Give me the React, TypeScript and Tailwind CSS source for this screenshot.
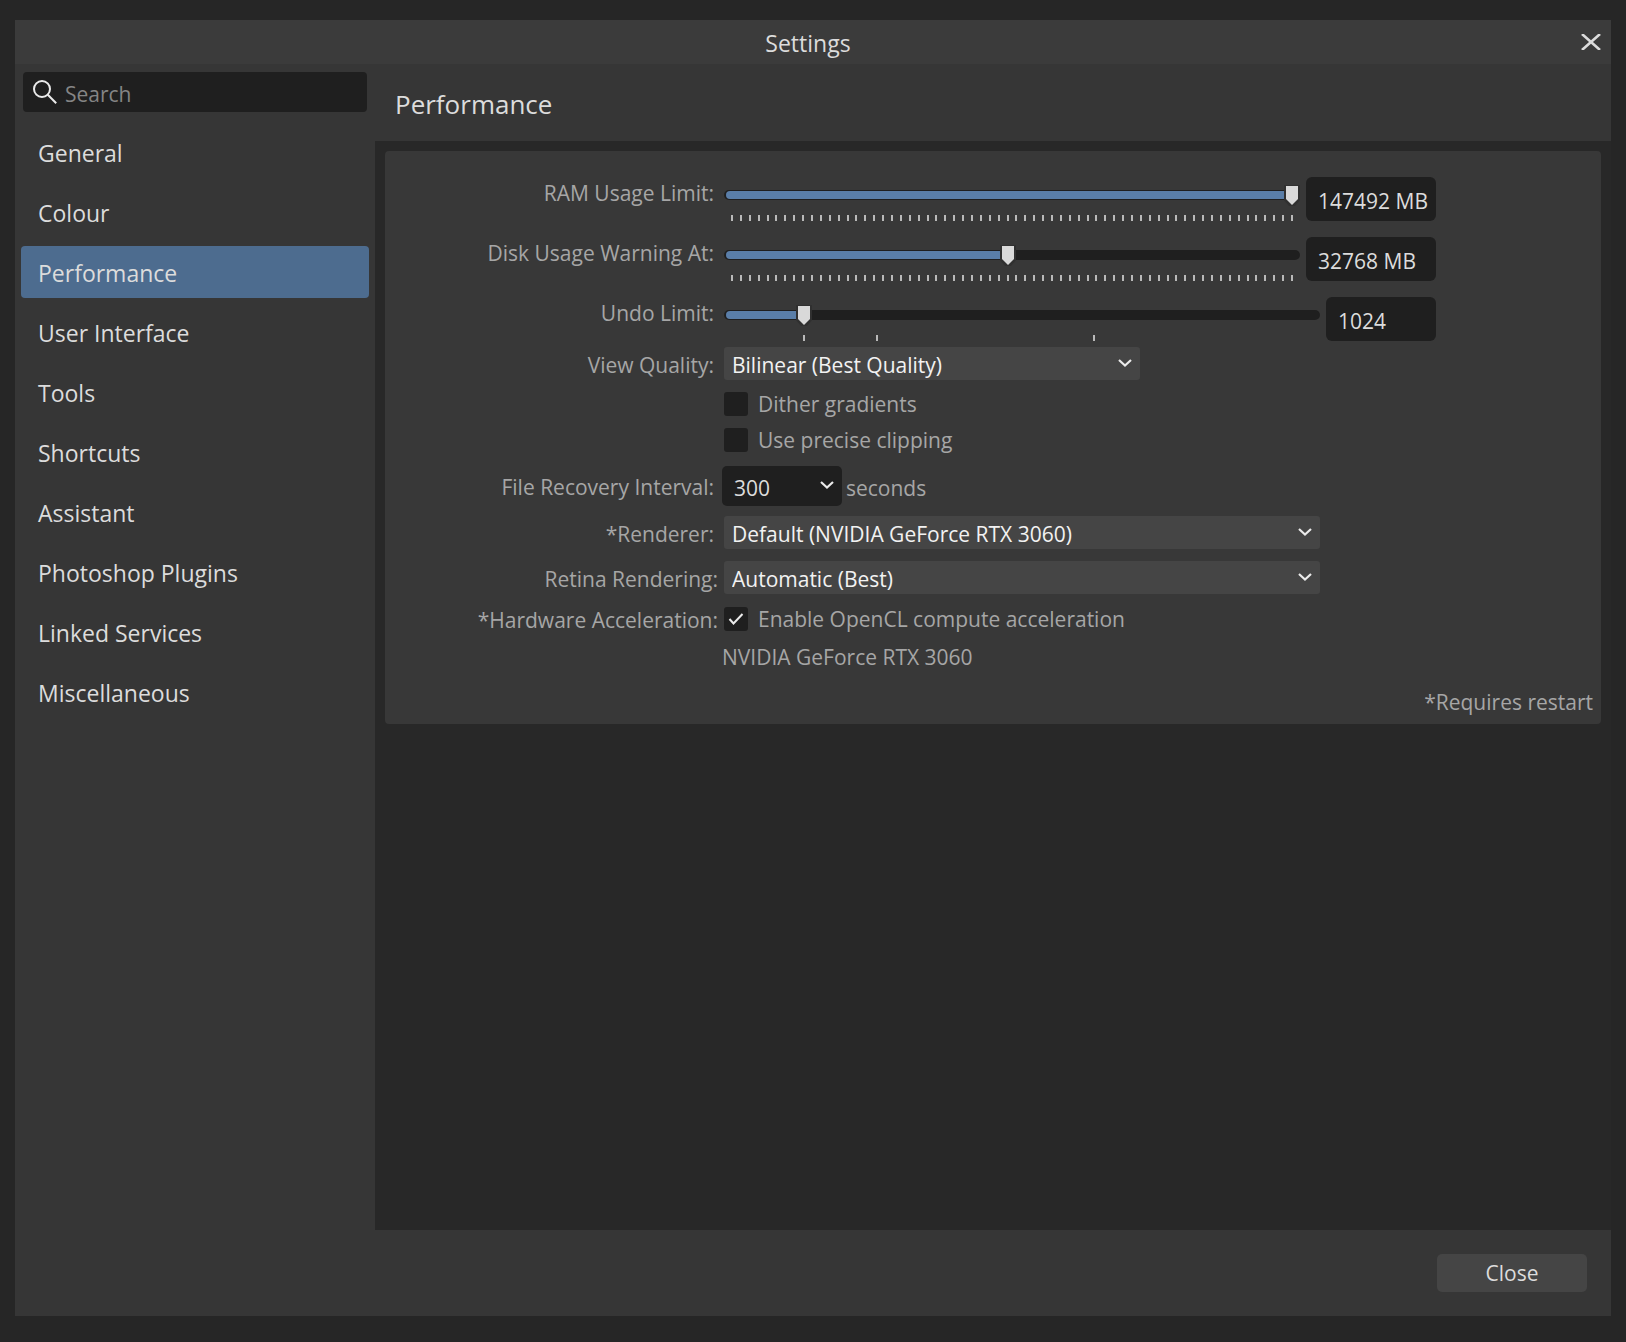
import { useState } from "react";
import type { ReactNode } from "react";

const SECTIONS = [
  "General",
  "Colour",
  "Performance",
  "User Interface",
  "Tools",
  "Shortcuts",
  "Assistant",
  "Photoshop Plugins",
  "Linked Services",
  "Miscellaneous",
];

// 64 evenly spaced marks
const EVEN_TICKS = Array.from({ length: 64 }, (_, i) => (i / 63) * 100);

function Chevron() {
  return (
    <svg
      className="pointer-events-none absolute right-2 top-1/2 -mt-[5px] h-2 w-3.5"
      viewBox="0 0 14 8"
      fill="none"
      stroke="#ebebeb"
      strokeWidth="2.2"
      aria-hidden
    >
      <path d="M1 1l6 5.5L13 1" />
    </svg>
  );
}

// label column; the dropdown rows further down sit a bit closer to their control
function RowLabel({ id, tight, children }: { id: string; tight?: boolean; children: ReactNode }) {
  return (
    <label htmlFor={id} className={`w-[339px] shrink-0 pt-0.5 text-right ${tight ? "pr-1.5" : "pr-2.5"}`}>
      {children}
    </label>
  );
}

type SliderRowProps = {
  id: string;
  label: string;
  initial: number;
  value: string;
  ticks: number[];
  narrowField?: boolean;
};

function SliderRow({ id, label, initial, value, ticks, narrowField }: SliderRowProps) {
  const [pos, setPos] = useState(initial);
  const left = `calc(8px + (100% - 16px) * ${pos / 1000})`;

  return (
    <div className="flex h-11 items-start">
      <RowLabel id={id}>{label}</RowLabel>
      <div className={`relative pt-[13px] ${narrowField ? "w-[596px]" : "w-[576px]"}`}>
        <div className="relative h-2.5 overflow-hidden rounded-full bg-[#1f1f1f] py-px pl-0.5">
          <div className="h-2 rounded-l-full bg-[#5a7ea8]" style={{ width: left }} />
        </div>
        <svg
          className="pointer-events-none absolute top-2 -ml-2 h-[22px] w-4"
          style={{ left }}
          viewBox="0 0 16 22"
          aria-hidden
        >
          <path d="M0 0h16v15l-5 6H5l-5-6z" fill="#303030" />
          <path d="M2 1h12v13l-6 6-6-6z" fill="#d9d9d9" />
        </svg>
        <input
          id={id}
          type="range"
          min={0}
          max={1000}
          value={pos}
          onChange={(e) => setPos(Number(e.target.value))}
          className="absolute inset-x-0 top-1.5 h-6 w-full cursor-pointer opacity-0"
        />
        <div className="relative mx-[7px] mt-[15px] h-1.5">
          {ticks.map((t) => (
            <span
              key={t}
              className="absolute top-0 h-1.5 w-0.5 bg-[#b9b9b9]"
              style={{ left: `calc((100% - 2px) * ${t / 100})` }}
            />
          ))}
        </div>
      </div>
      <input
        type="text"
        aria-label={`${label} value`}
        defaultValue={value}
        className={`ml-1.5 h-11 rounded-md bg-[#1f1f1f] pl-3 pt-1 text-[#dcdcdc] outline-none ${narrowField ? "w-[110px]" : "w-[130px]"}`}
      />
    </div>
  );
}

function SelectBox({ id, option, width }: { id: string; option: string; width: string }) {
  return (
    <div className={`relative ${width}`}>
      <select
        id={id}
        className="block h-[33px] w-full appearance-none rounded-[3px] bg-[#454545] pl-2 pt-0.5 text-[#f2f2f2] outline-none"
      >
        <option>{option}</option>
      </select>
      <Chevron />
    </div>
  );
}

function CheckBox({ id, label, checked }: { id: string; label: string; checked?: boolean }) {
  return (
    <div className="flex h-6 items-center">
      <div className="relative size-6">
        <input
          id={id}
          type="checkbox"
          defaultChecked={checked}
          className="peer block size-6 appearance-none rounded-[3px] bg-[#1f1f1f]"
        />
        <svg
          className="pointer-events-none absolute inset-0 hidden size-6 peer-checked:block"
          viewBox="0 0 24 24"
          fill="none"
          stroke="#ebebeb"
          strokeWidth="2"
          aria-hidden
        >
          <path d="M5.5 12l4 4.5L18.5 7" />
        </svg>
      </div>
      <label htmlFor={id} className="pl-2.5">
        {label}
      </label>
    </div>
  );
}

export default function App() {
  const [active, setActive] = useState("Performance");

  return (
    <div className="flex min-h-screen bg-[#262626] px-[15px] pb-[26px] pt-5 font-['Open_Sans','Noto_Sans',sans-serif] text-[21px] leading-7 text-[#a6a6a6]">
      <div className="flex flex-1 flex-col bg-[#363636]">
        {/* title bar */}
        <header className="flex h-11 items-center bg-[#3b3b3b] text-[#dcdcdc]">
          <h1 className="flex-1 pl-6 pt-0.5 text-center text-[23px]">Settings</h1>
          <button type="button" aria-label="Close window" className="mr-1.5 flex size-7 items-center justify-center">
            <svg className="h-4 w-5" viewBox="0 0 20 16" fill="none" stroke="#dcdcdc" strokeWidth="2.6" aria-hidden>
              <path d="M1 0l18 16M19 0L1 16" />
            </svg>
          </button>
        </header>

        <div className="flex flex-1">
          {/* sidebar */}
          <aside className="w-[360px] shrink-0 px-1.5 pt-2">
            <div className="mx-0.5 flex h-10 items-center rounded bg-[#1f1f1f] pl-2.5">
              <svg className="size-6 shrink-0" viewBox="0 0 24 24" fill="none" stroke="#ebebeb" strokeWidth="2" aria-hidden>
                <circle cx="9" cy="9" r="8" />
                <path d="M14.8 14.8l8.4 8.4" />
              </svg>
              <input
                type="search"
                aria-label="Search"
                placeholder="Search"
                className="h-10 min-w-0 flex-1 bg-transparent pl-2 pt-1 outline-none placeholder:text-[#858585]"
              />
            </div>
            <nav className="mt-3.5 flex flex-col gap-2 text-[23px]">
              {SECTIONS.map((name) => (
                <button
                  key={name}
                  type="button"
                  onClick={() => setActive(name)}
                  className={`h-[52px] rounded pl-[17px] pt-0.5 text-left text-[#dcdcdc] ${
                    name === active ? "bg-[#4d6c8f]" : ""
                  }`}
                >
                  {name}
                </button>
              ))}
            </nav>
          </aside>

          {/* page */}
          <main className="flex min-w-0 flex-1 flex-col">
            <h2 className="flex h-[77px] items-center pl-5 pt-0.5 text-[26px] text-[#dcdcdc]">{active}</h2>
            <div className="flex-1 bg-[#282828] p-2.5">
              <form className="rounded bg-[#383838] pb-2 pt-[26px]">
                <div className="flex flex-col gap-4">
                  <SliderRow id="ram" label="RAM Usage Limit:" initial={1000} value="147492 MB" ticks={EVEN_TICKS} />
                  <SliderRow id="disk" label="Disk Usage Warning At:" initial={493} value="32768 MB" ticks={EVEN_TICKS} />
                  <SliderRow id="undo" label="Undo Limit:" initial={124} value="1024" ticks={[12.4, 25, 62.4]} narrowField />
                </div>

                <div className="mt-1.5 flex items-center">
                  <RowLabel id="quality">View Quality:</RowLabel>
                  <SelectBox id="quality" option="Bilinear (Best Quality)" width="w-[416px]" />
                </div>

                <div className="mt-3 flex flex-col gap-3 pl-[339px]">
                  <CheckBox id="dither" label="Dither gradients" />
                  <CheckBox id="clipping" label="Use precise clipping" />
                </div>

                <div className="mt-3.5 flex items-center">
                  <RowLabel id="recovery">File Recovery Interval:</RowLabel>
                  <div className="relative -ml-0.5 w-[120px]">
                    <select
                      id="recovery"
                      className="block h-10 w-full appearance-none rounded-[5px] bg-[#1f1f1f] pl-3 pt-1 text-[#dcdcdc] outline-none"
                    >
                      <option>300</option>
                    </select>
                    <Chevron />
                  </div>
                  <span className="pl-1 pt-1">seconds</span>
                </div>

                <div className="mt-2.5 flex items-center">
                  <RowLabel id="renderer">*Renderer:</RowLabel>
                  <SelectBox id="renderer" option="Default (NVIDIA GeForce RTX 3060)" width="w-[596px]" />
                </div>

                <div className="mt-3 flex items-center">
                  <RowLabel id="retina" tight>
                    Retina Rendering:
                  </RowLabel>
                  <SelectBox id="retina" option="Automatic (Best)" width="w-[596px]" />
                </div>

                <div className="mt-2.5 flex items-center">
                  <RowLabel id="opencl" tight>
                    *Hardware Acceleration:
                  </RowLabel>
                  <CheckBox id="opencl" label="Enable OpenCL compute acceleration" checked />
                </div>

                <p className="mt-[9px] pl-[337px]">NVIDIA GeForce RTX 3060</p>
                <p className="mt-[17px] pr-2 text-right">*Requires restart</p>
              </form>
            </div>
          </main>
        </div>

        <footer className="flex h-[86px] items-center justify-end pr-6">
          <button type="button" className="h-[38px] w-[150px] rounded-[5px] bg-[#454545] text-[21px] text-[#dcdcdc]">
            Close
          </button>
        </footer>
      </div>
    </div>
  );
}
